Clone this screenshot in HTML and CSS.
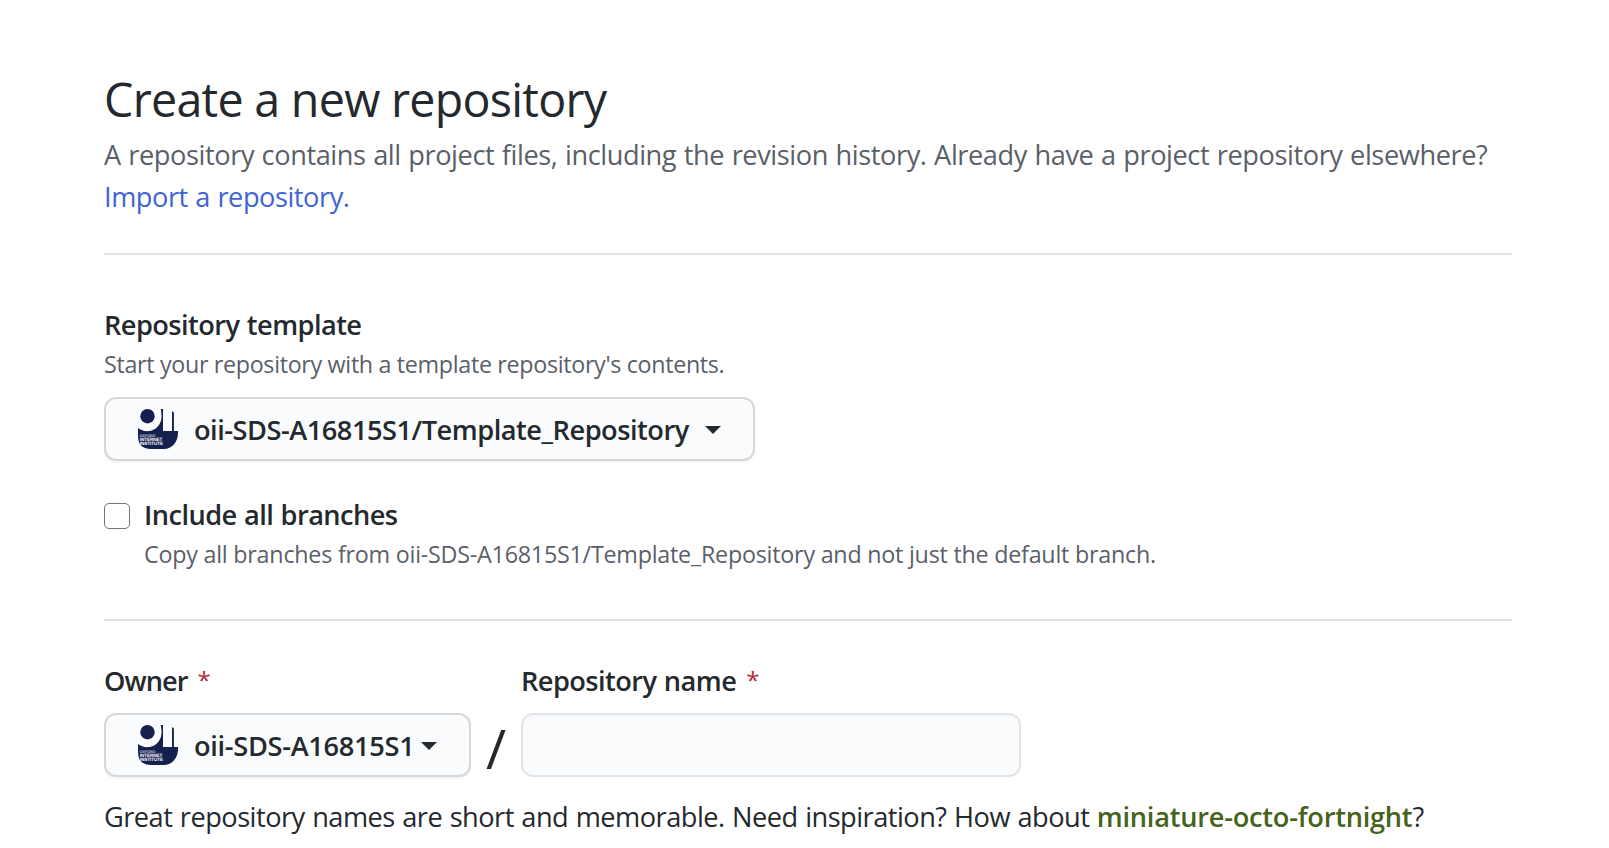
FILE: index.html
```html
<!DOCTYPE html>
<html lang="en">
<head>
<meta charset="utf-8">
<title>Create a new repository</title>
<link rel="stylesheet" href="styles.css">
</head>
<body>
<main class="page">
  <header class="intro">
    <h1 class="title">Create a new repository</h1>
    <p class="lead">A repository contains all project files, including the revision history. Already have a project repository elsewhere? <a class="link" href="#">Import a repository.</a></p>
  </header>
  <section class="template">
    <div class="label">Repository template</div>
    <div class="note">Start your repository with a template repository's contents.</div>
    <button class="picker picker-template" type="button">
      <svg class="avatar" viewBox="0 0 40 40">
        <path fill="#16204f" d="M0 19c3 2.500 7 3.500 11.500 3C18 21.200 23 15.500 23.500 8.500 23.700 5.500 23.400 3 22.700 0H25V22H40V24c0 9-6 16-14 16H13C8.500 40 5 38.500 2.500 36 .8 34 0 30 0 26z"/>
        <circle cx="9.500" cy="7.200" r="7.200" fill="#16204f"/>
        <path fill="#16204f" d="M34 2.200c1 .3 1.600.8 1.900 1.600V22H34z"/>
        <g class="avatar-text">
          <text class="avatar-small" x="1.800" y="27.600">OXFORD</text>
          <text x="1.800" y="32">INTERNET</text>
          <text x="1.800" y="36.400">INSTITUTE</text>
        </g>
      </svg>
      <span class="picker-text picker-text-template">oii-SDS-A16815S1/Template_Repository</span>
      <span class="caret"></span>
    </button>
    <div class="option">
      <input class="check" type="checkbox" id="branches">
      <div>
        <label class="label" for="branches">Include all branches</label>
        <div class="note note-copy">Copy all branches from oii-SDS-A16815S1/Template_Repository and not just the default branch.</div>
      </div>
    </div>
  </section>
  <section class="naming">
    <div class="field">
      <div class="label"><span class="owner-text">Owner</span><span class="star">*</span></div>
      <button class="picker picker-owner" type="button">
        <svg class="avatar" viewBox="0 0 40 40">
          <path fill="#16204f" d="M0 19c3 2.500 7 3.500 11.500 3C18 21.200 23 15.500 23.500 8.500 23.700 5.500 23.400 3 22.700 0H25V22H40V24c0 9-6 16-14 16H13C8.500 40 5 38.500 2.500 36 .8 34 0 30 0 26z"/>
          <circle cx="9.500" cy="7.200" r="7.200" fill="#16204f"/>
          <path fill="#16204f" d="M34 2.200c1 .3 1.600.8 1.900 1.600V22H34z"/>
          <g class="avatar-text">
            <text class="avatar-small" x="1.800" y="27.600">OXFORD</text>
            <text x="1.800" y="32">INTERNET</text>
            <text x="1.800" y="36.400">INSTITUTE</text>
          </g>
        </svg>
        <span class="picker-text">oii-SDS-A16815S1</span>
        <span class="caret"></span>
      </button>
    </div>
    <span class="slash">/</span>
    <div class="field">
      <label class="label label-name" for="name">Repository name<span class="star">*</span></label>
      <input class="name-input" type="text" id="name">
    </div>
  </section>
  <p class="hint">Great repository names are short and memorable. Need inspiration? How about <strong class="suggestion">miniature-octo-fortnight</strong>?</p>
</main>
</body>
</html>
```
FILE: styles.css
```css
* { box-sizing: border-box; }
body {
  margin: 0;
  height: 848px;
  overflow: hidden;
  background: #fff;
  color: #24292e;
  font-family: "Open Sans", sans-serif;
  font-size: 27.2px;
  font-weight: 400;
  line-height: 42px;
}
.page { width: 1408px; margin-left: 104px; padding-top: 69px; }
.intro { padding-bottom: 35px; border-bottom: 2px solid #e1e3e8; }
.title {
  margin: 0 0 5px;
  font-size: 46.6px;
  font-weight: 400;
  line-height: 60px;
  letter-spacing: -0.72px;
}
.lead { margin: 0; color: #5a5f69; letter-spacing: -0.42px; word-spacing: 0.9px; }
.link { color: #4064d8; text-decoration: none; letter-spacing: -0.46px; }
.template { padding: 49px 0 47px; border-bottom: 2px solid #e1e3e8; }
.label {
  display: block;
  font-weight: 600;
  letter-spacing: -0.55px;
  word-spacing: 0.8px;
}
.note {
  color: #5a5f69;
  font-size: 23.3px;
  line-height: 36px;
  letter-spacing: -0.33px;
}
.note-copy { letter-spacing: -0.235px; }
.picker {
  display: flex;
  align-items: center;
  height: 64px;
  padding: 0 0 0 32px;
  border: 2px solid #d5d8da;
  border-radius: 12px;
  background: #fafbfc;
  box-shadow: 0 2px 0 rgba(27, 31, 35, 0.04);
  color: #24292e;
  font: 600 27.2px/42px "Open Sans", sans-serif;
  letter-spacing: -0.3px;
  white-space: nowrap;
}
.picker-template { width: 651px; margin-top: 15px; }
.picker-owner { width: 367px; margin-top: 11px; }
.avatar { flex: none; width: 40px; height: 40px; margin-right: 16px; }
.avatar-text {
  fill: #fff;
  font-family: "Liberation Sans", sans-serif;
  font-size: 4.6px;
  font-weight: 700;
  letter-spacing: -0.05px;
  text-rendering: geometricPrecision;
}
.avatar-small { font-size: 3.7px; font-weight: 400; }
.picker-text { width: 218px; margin-right: 9px; padding-top: 2px; text-align: left; }
.picker-text-template { width: 496px; margin-right: 15px; letter-spacing: -0.48px; }
.caret {
  width: 16px;
  height: 8px;
  margin-top: 2px;
  background: #24292e;
  clip-path: polygon(0 0, 100% 0, 50% 100%);
}
.option { display: flex; margin-top: 33px; }
.check {
  appearance: none;
  flex: none;
  width: 26px;
  height: 26px;
  margin: 9px 14px 0 0;
  border: 1px solid #767676;
  border-radius: 5px;
  background: #fff;
}
.naming { display: flex; padding-top: 39px; }
.owner-text { letter-spacing: -0.95px; }
.star {
  display: inline-block;
  margin-left: 10px;
  color: #b02a37;
  font-weight: 400;
  font-size: 24px;
  line-height: 20px;
  vertical-align: 2px;
}
.slash {
  width: 50px;
  padding-top: 74px;
  text-align: center;
  font-size: 55px;
  font-weight: 400;
  line-height: 28px;
}
.name-input {
  display: block;
  width: 500px;
  height: 64px;
  margin-top: 11px;
  border: 2px solid #e1e4e8;
  border-radius: 12px;
  background: #fafbfc;
  box-shadow: inset 0 2px 0 rgba(225, 228, 232, 0.2);
}
.hint { margin: 19px 0 0; letter-spacing: -0.51px; word-spacing: 0.9px; white-space: nowrap; }
.suggestion { color: #46631c; font-weight: 600; letter-spacing: -0.24px; }
```
